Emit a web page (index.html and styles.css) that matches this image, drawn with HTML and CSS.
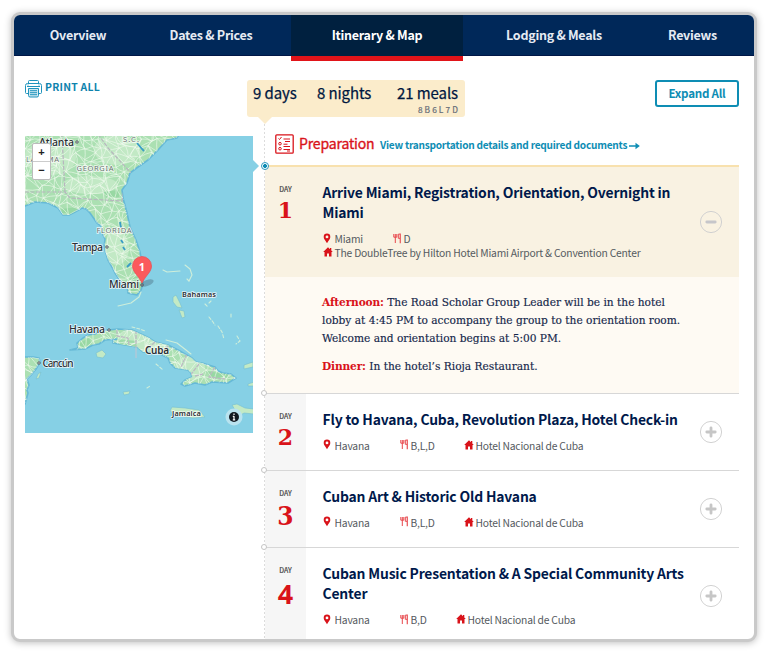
FILE: index.html
```html
<!DOCTYPE html>
<html lang="en">
<head>
<meta charset="utf-8">
<title>Itinerary &amp; Map</title>
<link rel="stylesheet" href="styles.css">
</head>
<body>
<svg width="0" height="0" class="sprite" aria-hidden="true">
  <symbol id="pin" viewBox="0 0 8 11"><path fill="#d9131a" fill-rule="evenodd" d="M4 .6A3.3 3.3 0 0 0 .7 3.9C.7 6 2.300 7.200 4 10.200 5.700 7.200 7.300 6 7.300 3.900A3.300 3.300 0 0 0 4 .6zM4 2.500a1.400 1.400 0 1 1 0 2.800 1.400 1.400 0 0 1 0-2.800z"/></symbol>
  <symbol id="fork" viewBox="0 0 9 11"><path fill="none" stroke="#e8474c" d="M.8 1v3.200h3V1M2.300 1v9M5.300 1v4.500"/><path fill="none" stroke="#ea5e62" stroke-width="1.300" d="M5.500 1.200h1.800v9M5.500 5.300h1.800"/></symbol>
  <symbol id="home" viewBox="0 0 10 10"><path fill="#d9131a" d="M5 .3 .2 5h1.300v4.500H4V6.500h2v3h2.500V5h1.300L8.300 3.500V1H7v1.200z"/></symbol>
  <symbol id="plus" viewBox="0 0 24 24"><circle cx="12" cy="12" r="10.600" fill="none" stroke="#d2d2d2"/><path d="M12 7.800v8.400M7.800 12h8.400" stroke="#c6c6c6" stroke-width="2.800" stroke-linecap="round"/></symbol>
  <symbol id="minus" viewBox="0 0 24 24"><circle cx="12" cy="12" r="10.600" fill="none" stroke="#d0d0d0"/><path d="M7.800 12h8.400" stroke="#c6c6ca" stroke-width="2.800" stroke-linecap="round"/></symbol>
</svg>
<div class="frame">
  <nav class="tabs">
    <a class="tab t1">Overview</a>
    <a class="tab t2">Dates &amp; Prices</a>
    <a class="tab t3 active">Itinerary &amp; Map</a>
    <a class="tab t4">Lodging &amp; Meals</a>
    <a class="tab t5">Reviews</a>
  </nav>
  <main class="main">
    <aside class="side">
      <a class="print">
        <svg width="17" height="18" viewBox="0 0 17 18" fill="none" stroke="#2094bd" stroke-width="1"><path d="M3.500 4V1.500q0-1 1-1h8q1 0 1 1V4M2.500 3.500h12q2 0 2 2v7q0 1-1 1h-2M3.500 13.500h-2q-1 0-1-1v-7q0-2 2-2M2 6.500h13"/><path fill="#cfe9f1" d="M3.500 8.500h10v7q0 1.500-1.500 1.500H5q-1.500 0-1.500-1.500z"/><path d="M5 10.700h7M5 12.700h7M5 14.700h7M2.500 5h1M13.500 5h1"/></svg>
        <span>PRINT ALL</span>
      </a>
      <div class="map">
        <svg width="228" height="297" viewBox="0 0 228 297">
          <defs>
            <clipPath id="landclip">
              <path id="usa" d="M-2-2H154L152 2 142 4 133 14 123 24 113 31 105 37 102 47 97 54 98 62 102 77 105 91 111 104 115 116 117 127 118 141 118 148 116 154 112 159 107 158 103 157 102 150 96 146 90 137 87 131 83 124 79 111 80 103 77 97 76 90 72 87 65 77 61 73 57 72 50 76 44 79 38 79 33 72 23 67 10 66 0 70-2 70z"/>
              <path id="cuba" d="M45 214 53 212 52 207 58 202 63 199 70 198 76 195 83 194 93 193 107 194 118 199 124 202 130 206 143 209 153 214 160 218 167 222 171 226 177 227 190 231 193 235 198 237 206 238 211 242 203 247 187 246 180 249 170 247 160 250 156 248 160 244 167 241 166 237 163 234 150 232 145 227 143 222 133 217 118 216 112 211 100 209 88 207 88 204 93 203 80 204 74 208 68 209 60 213z"/>
              <path id="yucatan" d="M-2 221 5 221 8 221 14 222 15 226 11 233 6 239 2 243 4 249 2 254 3 257 0 268-2 270z"/>
            </clipPath>
          </defs>
          <rect width="228" height="297" fill="#86d0e5"/>
          <g fill="#ace0b2" stroke="#66b9d6" stroke-width="1.600" stroke-linejoin="round"><use href="#usa"/><use href="#cuba"/><use href="#yucatan"/></g>
          <g clip-path="url(#landclip)">
            <g fill="#c8ecca" opacity=".8"><ellipse cx="25" cy="22" rx="26" ry="17"/><ellipse cx="92" cy="14" rx="23" ry="15"/><ellipse cx="65" cy="49" rx="28" ry="9"/><ellipse cx="92" cy="112" rx="12" ry="17"/><ellipse cx="120" cy="204" rx="28" ry="12"/><ellipse cx="165" cy="232" rx="15" ry="12"/></g>
            <g fill="#8dd49b" opacity=".65"><path d="M78 56 94 54 94 61 82 62zM36 73 54 71 48 79 38 79zM53 208 64 202 66 207 59 212zM92 203 112 205 111 211 95 208zM180 235 202 238 206 244 188 242zM105 143 113 140 116 152 106 157z"/></g>
            <path id="roads" fill="none" stroke="#f3fbf2" stroke-width=".65" stroke-opacity=".9"/>
            <path d="M0 56H40L45 62 97 65 98 55M40 56 37 0M73-2 83 12 106 37" fill="none" stroke="#b7b6be" stroke-width="1.200" stroke-dasharray="4 1.500"/>
            <path d="M111 194V218M92 194V200L103 202 104 209M130 206 121 214M162 218 156 231M174 228 164 241M190 231 184 241 200 243M170 240 178 238M143 210 135 218" fill="none" stroke="#bcb9c3" stroke-width="1.300" stroke-dasharray="4 1"/>
            <path d="M112 7l5 6 2 2M95 86l1 6M96 104l2 3M98 111l2 3M102 131l4-4" stroke="#3a9cc6" stroke-width="1.800" fill="none"/>
          </g>
          <path d="M111 211v11" stroke="#c3c5d1"/>
          <g fill="#c3eac5" stroke="#73bdd2" stroke-width=".6"><path d="M148 161l3-2 4 8 2 5-5-1-4-5zM154 174l5 1 1 6-3 1zM71 217l6-3 4 4-3 4-6-1zM147 271l13 1 14 2 6 7-12 1-15-2-8-5zM207 269l5-1 8 4 9 1v5l-10-1-5 3-4-6zM219 229l9-3v5l-9 2zM223 248l6-2v4h-6zM13 238l3-2-2 6-3 1zM98 256l7-1-1 3-5 1z"/></g>
          <g fill="none" stroke="#ceeeda" stroke-width="1.100" stroke-linecap="round" stroke-linejoin="round"><path d="M138 134l4 2 13-1M160 129l5 4 2 6-3 6M93 170l13-3 8-6 2-5M141 204l11 3 9 7 5 4"/><path stroke-dasharray="3 2" d="M184 181l4 5 2 3M186 165l-2 2M193 190l4 6 2 7M212 200l3 5-4 3M180 168l3 3M122 252l3-2M131 228l7 6M107 191l8 2 5 2M206 178v3M162 143l2 2"/></g>
          <g class="region" text-anchor="middle">
            <text x="1" y="26" textLength="33" text-anchor="start">LABAMA</text>
            <text x="106" y="6" textLength="16">S.C.</text>
            <text x="70" y="35" textLength="37">GEORGIA</text>
            <text x="89" y="97" textLength="35">FLORIDA</text>
          </g>
          <g class="city">
            <text x="14" y="10" textLength="35">Atlanta</text>
            <text x="47" y="115" textLength="31">Tampa</text>
            <text x="84" y="152" textLength="30">Miami</text>
            <text x="44" y="197" textLength="36">Havana</text>
            <text x="17.500" y="231" textLength="31">Cancún</text>
            <text class="bold" x="120" y="218" textLength="24">Cuba</text>
            <text class="small" x="157" y="160.500" textLength="34">Bahamas</text>
            <text class="small" x="147" y="280" textLength="29">Jamaica</text>
          </g>
          <g fill="#fff" stroke="#4c535a" stroke-width="1"><circle cx="52" cy="6" r="1.200"/><circle cx="82" cy="111" r="1.200"/><circle cx="117" cy="149" r="1.200"/><circle cx="84" cy="194" r="1.200"/><circle cx="14" cy="227" r="1.200"/></g>
          <ellipse cx="122" cy="147" rx="7" ry="3" fill="#345" opacity=".3" transform="rotate(-20 122 147)"/>
          <path d="M117 147C113 139 107.500 136 107.500 130a9.500 9.500 0 0 1 19 0C126.500 136 121 139 117 147z" fill="#fb5a5c" stroke="#e94b50" stroke-width=".7"/>
          <text x="116.800" y="134.500" text-anchor="middle" class="marker">1</text>
          <circle cx="209" cy="281" r="8.500" fill="#b9e3ef"/><circle cx="209" cy="281" r="5" fill="#101820"/>
          <path d="M209 280v4M209 277.600v1.300M207.800 280.400h1.200M207.800 283.800h2.400" stroke="#fff" stroke-width="1.200"/>
        </svg>
        <div class="zoom"><b>+</b><b>−</b></div>
      </div>
    </aside>
    <section class="plan">
      <header class="summary">
        <div class="totals">
          <span class="days">9 days</span><span class="nights">8 nights</span>
          <span class="meals">21 meals<small>8B6L7D</small></span>
        </div>
        <a class="expand"><span>Expand All</span></a>
      </header>
      <div class="timeline">
        <div class="prep">
          <svg width="19" height="20" viewBox="0 0 19 20" fill="none" stroke="#d9131a"><rect x=".8" y=".8" width="17.400" height="18.400" rx="1" stroke-width="1.300"/><path d="M3.500 4.500l1 1 2-2.500M8.500 5H15M10 7.500h5M8.500 10.200h4M8.500 12.500H15M8.500 15.500H15M12 17h3"/><circle cx="5" cy="9.700" r="1.300"/><circle cx="5" cy="14.700" r="1.300"/></svg>
          <h2>Preparation</h2>
          <a>View transportation details and required documents</a>
          <svg class="arrow" width="11" height="8" viewBox="0 0 11 8"><path d="M0 4h8" stroke="#0e8db4" stroke-width="1.500"/><path d="M6.500.8 10.800 4 6.500 7.200z" fill="#0e8db4"/></svg>
        </div>
        <article class="day open">
          <i class="dot"></i>
          <div class="num"><small>DAY</small><b>1</b></div>
          <div class="info">
            <h3>Arrive Miami, Registration, Orientation, Overnight in<br>Miami</h3>
            <div class="meta"><span class="place"><svg class="pin"><use href="#pin"/></svg>Miami</span><span class="food"><svg class="fork"><use href="#fork"/></svg>D</span></div>
            <div class="meta"><span class="hotel"><svg class="home"><use href="#home"/></svg>The DoubleTree by Hilton Hotel Miami Airport &amp; Convention Center</span></div>
          </div>
          <svg class="toggle"><use href="#minus"/></svg>
        </article>
        <div class="details">
          <p><b>Afternoon:</b> The Road Scholar Group Leader will be in the hotel<br>lobby at 4:45 PM to accompany the group to the orientation room.<br>Welcome and orientation begins at 5:00 PM.</p>
          <p><b>Dinner:</b> In the hotel’s Rioja Restaurant.</p>
        </div>
        <article class="day">
          <i class="dot"></i>
          <div class="num"><small>DAY</small><b>2</b></div>
          <div class="info">
            <h3>Fly to Havana, Cuba, Revolution Plaza, Hotel Check-in</h3>
            <div class="meta"><span class="place wide"><svg class="pin"><use href="#pin"/></svg>Havana</span><span class="food"><svg class="fork"><use href="#fork"/></svg>B,L,D</span><span class="hotel"><svg class="home"><use href="#home"/></svg>Hotel Nacional de Cuba</span></div>
          </div>
          <svg class="toggle"><use href="#plus"/></svg>
        </article>
        <article class="day">
          <i class="dot"></i>
          <div class="num"><small>DAY</small><b class="three">3</b></div>
          <div class="info">
            <h3>Cuban Art &amp; Historic Old Havana</h3>
            <div class="meta"><span class="place wide"><svg class="pin"><use href="#pin"/></svg>Havana</span><span class="food"><svg class="fork"><use href="#fork"/></svg>B,L,D</span><span class="hotel"><svg class="home"><use href="#home"/></svg>Hotel Nacional de Cuba</span></div>
          </div>
          <svg class="toggle"><use href="#plus"/></svg>
        </article>
        <article class="day">
          <i class="dot"></i>
          <div class="num"><small>DAY</small><b class="four">4</b></div>
          <div class="info">
            <h3>Cuban Music Presentation &amp; A Special Community Arts<br>Center</h3>
            <div class="meta"><span class="place wide"><svg class="pin"><use href="#pin"/></svg>Havana</span><span class="food short"><svg class="fork"><use href="#fork"/></svg>B,D</span><span class="hotel"><svg class="home"><use href="#home"/></svg>Hotel Nacional de Cuba</span></div>
          </div>
          <svg class="toggle"><use href="#plus"/></svg>
        </article>
      </div>
    </section>
  </main>
</div>
<script src="roads.js"></script>
</body>
</html>
```
FILE: roads.js
```js
// Builds an irregular road mesh; the land clip path trims it to the coast.
let seed = 11;
const rnd = () => (seed = (seed * 16807) % 2147483647) / 2147483647;
const step = 8, cols = 30, rows = 36, pts = [];
for (let r = 0; r < rows; r++) {
  pts.push([]);
  for (let c = 0; c < cols; c++) {
    pts[r].push([c * step - 4 + (rnd() - .5) * 8, r * step - 4 + (rnd() - .5) * 8]);
  }
}
let d = "";
const link = (a, b) => {
  const mx = (a[0] + b[0]) / 2 + (rnd() - .5) * 4, my = (a[1] + b[1]) / 2 + (rnd() - .5) * 4;
  d += `M${a[0].toFixed(1)} ${a[1].toFixed(1)}Q${mx.toFixed(1)} ${my.toFixed(1)} ${b[0].toFixed(1)} ${b[1].toFixed(1)}`;
};
for (let r = 0; r < rows - 1; r++) {
  for (let c = 0; c < cols - 1; c++) {
    link(pts[r][c], pts[r][c + 1]);
    link(pts[r][c], pts[r + 1][c]);
    if (rnd() < .6) link(pts[r][c], pts[r + 1][c + 1]);
    else link(pts[r][c + 1], pts[r + 1][c]);
  }
}
document.getElementById("roads").setAttribute("d", d);
```
FILE: styles.css
```css
* { box-sizing: border-box; }
body { margin: 0; padding: 12px 0 0 11px; background: #fff; font-family: "Noto Sans CJK SC", "Noto Sans", sans-serif; overflow: hidden; height: 653px; }
h2, h3, p { margin: 0; }
.sprite { position: absolute; }
.frame { width: 746px; height: 630px; border: 3px solid #c9c9c9; border-radius: 9px; overflow: hidden; background: #fff; box-shadow: 0 1px 7px rgba(0,0,0,.25); }
.tabs { display: flex; height: 41px; background: #002859; border-bottom: 1px solid #001747; }
.tab { display: flex; justify-content: center; height: 40px; line-height: 39px; font-size: 12.5px; letter-spacing: -.27px; font-weight: 700; color: #e6ebf3; white-space: nowrap; }
.t1 { width: 128px; } .t2 { width: 138px; margin-right: 11px; }
.t3 { width: 172px; } .t4 { width: 182px; } .t5 { width: 95px; }
.tab.active { height: 46px; background: #00203f; border-bottom: 5px solid #e11419; color: #fff; }
.main { display: flex; padding-left: 11px; gap: 11px; }
.side { width: 228px; flex: none; padding-top: 24px; }
.print { display: flex; height: 18px; gap: 3px; color: #0e83ad; font-size: 10.4px; font-weight: 700; line-height: 13px; letter-spacing: .25px; white-space: nowrap; }
.map { position: relative; margin-top: 38px; height: 297px; }
.map::after { content: ""; position: absolute; left: 228px; top: 24px; border: 6px solid transparent; border-left-color: #86d0e5; border-right: 0; }
.map svg { display: block; }
.map text { font-family: "Noto Sans", sans-serif; paint-order: stroke; stroke: #fff; stroke-width: 1.6px; stroke-opacity: .8; fill: #2a2f35; }
.map .region text { font-size: 7.5px; fill: #69736f; }
.map .city text { font-size: 10.5px; font-weight: 500; }
.map .city .bold { font-weight: 600; font-size: 10px; }
.map .city .small { font-weight: 600; font-size: 7.5px; }
.map .marker { fill: #fff; stroke: none; font-size: 11px; font-weight: 700; }
.zoom { position: absolute; left: 7px; top: 7px; width: 19px; height: 37px; background: #fff; border: 1px solid #bbb; border-radius: 2px; }
.zoom b { display: block; height: 17px; text-align: center; font: bold 11px/17px "Liberation Sans", sans-serif; color: #222; }
.zoom b + b { border-top: 1px solid #ccc; }
.plan { width: 475px; }
.summary { display: flex; justify-content: space-between; height: 68px; padding-top: 24px; }
.totals { position: relative; display: flex; width: 218px; height: 37px; margin-left: -17px; padding-left: 6px; background: #fbeccb; border-radius: 3px; color: #00173f; font-size: 15px; line-height: 25px; letter-spacing: -.1px; white-space: nowrap; -webkit-text-stroke: .25px #00173f; }
.totals::after { content: ""; position: absolute; left: 11px; top: 37px; border: 7px solid transparent; border-top-color: #fbeccb; border-bottom: 0; }
.days { width: 64px; } .nights { width: 80px; }
.meals { width: 61px; text-align: right; }
.meals small { display: block; margin: 0 -2px 0 0; font-size: 8.3px; line-height: 9px; letter-spacing: 2.1px; color: #666c78; -webkit-text-stroke: .2px #666c78; }
.expand { width: 84px; height: 27px; border: 2px solid #0e8db4; border-radius: 3px; color: #0e8db4; font-weight: 700; font-size: 11.6px; letter-spacing: -.25px; line-height: 22px; text-align: center; }
.timeline { background: linear-gradient(#dcdcdc 50%, transparent 50%) 0 0 / 1px 4px repeat-y; padding-left: 1px; }
.prep { display: flex; height: 41px; padding: 10px 0 0 10px; color: #0e8db4; font-size: 10.1px; letter-spacing: -.24px; font-weight: 700; line-height: 21px; white-space: nowrap; }
.prep h2 { width: 81px; margin-left: 5px; font-size: 14px; letter-spacing: -.15px; line-height: 18px; font-weight: 400; color: #d9131a; -webkit-text-stroke: .35px #d9131a; }
.prep .arrow { margin: 8px 0 0 2px; }
.day { position: relative; display: flex; border-top: 1px solid #d7d7d7; }
.num { width: 41px; flex: none; background: #f6f6f6; text-align: center; padding-top: 16px; }
.num small { display: block; font-size: 7px; line-height: 12px; color: #444; -webkit-text-stroke: .2px #444; }
.num b { display: block; font: bold 22px/31px "DejaVu Serif", serif; color: #d9131a; }
.num .three { font: bold 26px/35px "DejaVu Serif Condensed", serif; }
.num .four { font: bold 27px/35px "Noto Sans", sans-serif; }
.info { flex: 1; padding: 15px 0 17px 16.5px; }
.info h3 { font-size: 13.9px; letter-spacing: -.17px; line-height: 20.5px; color: #00194b; margin-bottom: 9.5px; white-space: nowrap; }
.meta { display: flex; height: 14px; line-height: 14px; font-size: 10.3px; letter-spacing: -.2px; color: #555a60; white-space: nowrap; }
.meta > span { display: flex; align-items: flex-start; }
.pin { width: 8px; height: 11px; margin: .5px 4px 0 0; }
.fork { width: 9px; height: 11px; margin: .5px 2px 0 0; }
.home { width: 10px; height: 10px; margin: 1px 2px 0 0; }
.place { width: 70px; } .place.wide { width: 77px; }
.food { width: 64px; } .food.short { width: 56px; }
.toggle { width: 24px; height: 24px; flex: none; margin-right: 16.5px; align-self: center; }
.dot { position: absolute; left: -4px; top: -4px; width: 6px; height: 6px; border: 1px solid #c5c5c5; border-radius: 50%; background: #fff; }
.open { border-top: 2px solid #f8e1ae; background: #f9f2e2; }
.open .num { background: none; }
.open .info { padding-top: 14.5px; }
.open .dot { left: -4.500px; top: -5px; width: 8px; height: 8px; border: 1px solid #2a99bf; background: radial-gradient(circle, #0e8db4 0 1.8px, #fff 2.2px); }
.details { height: 115.5px; padding: 16px 0 0 57px; background: #fefaf3; font: 11.8px/18px "DejaVu Serif Condensed", "DejaVu Serif", serif; color: #14264a; white-space: nowrap; -webkit-text-stroke: .15px #14264a; }
.details p { margin-bottom: 10px; }
.details b { color: #d9131a; letter-spacing: -.15px; -webkit-text-stroke: 0; }
```
